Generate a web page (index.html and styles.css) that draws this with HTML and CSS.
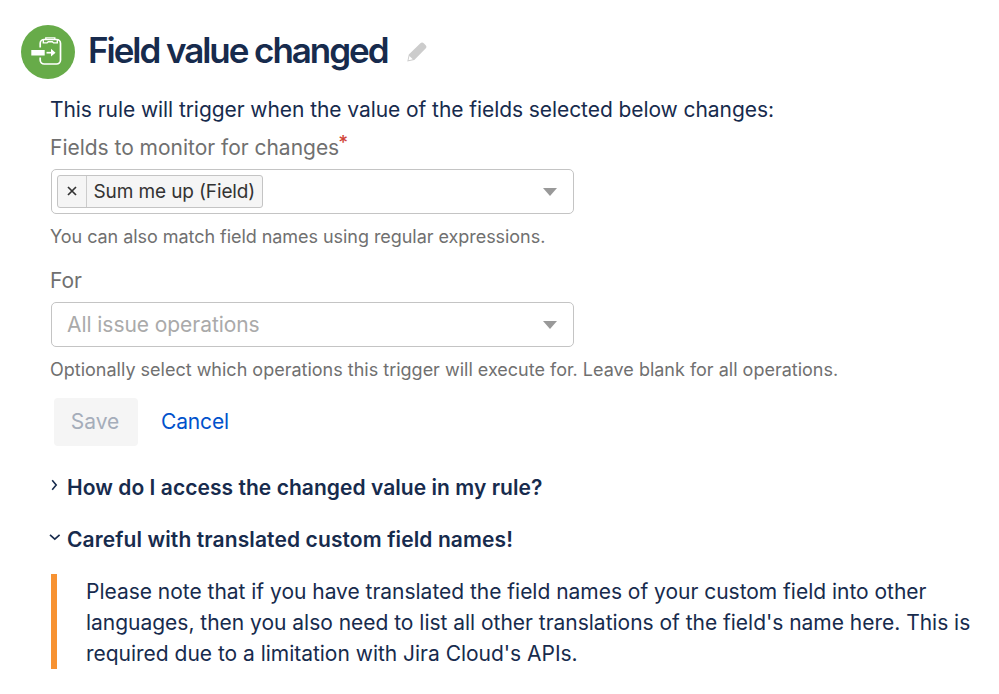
FILE: index.html
```
<!DOCTYPE html>
<html lang="en">
<head>
    <meta charset="UTF-8">
    <meta name="viewport" content="width=device-width, initial-scale=1.0">
    <title>Field value changed</title>
    <link rel="stylesheet" href="styles.css">
</head>
<body>
    <header class="rule-header">
        <svg class="rule-icon" viewBox="0 0 54 54">
            <circle cx="27" cy="27" r="27" fill="#67ab49"/>
            <g fill="none" stroke="#fff" stroke-width="1.700">
                <path d="M19.200 22.500V18.500a4 4 0 0 1 4-4h12.300a4 4 0 0 1 4 4v16.500a4 4 0 0 1-4 4H23.200a4 4 0 0 1-4-4V32.500"/>
                <path d="M22.300 15v2.900h3.700l1.300-1.200h4l1.300 1.200h3.700V15" stroke-width="1.400"/>
                <path d="M24.800 14.500v-1.600h9v1.600" stroke-width="1.400"/>
                <path d="M25.500 27.700h5"/>
            </g>
            <path d="M10.300 25h13.400v5.400H10.300zM30 23.800l4.500 3.900-4.500 3.900z" fill="#fff"/>
        </svg>
        <h1>Field value changed</h1>
        <svg class="edit-icon" viewBox="0 0 20 20">
            <path d="M1.800 12.500L13.400 1.300c1-1 2.400-1 3.600.1l1.500 1.500c1.200 1.200 1.200 2.500.1 3.600L7.300 18 .3 19.500z" fill="#ccc"/>
            <path d="M2.400 14l3.400 3.300-4.300 1z" fill="#fff"/>
        </svg>
    </header>

    <main>
        <p class="intro">This rule will trigger when the value of the fields selected below changes:</p>

        <form>
            <div class="field">
                <div class="label">Fields to monitor for changes<span class="required">*</span></div>
                <div class="select">
                    <div class="tag">
                        <span class="tag-remove">
                            <svg width="10" height="10" viewBox="0 0 10 10"><path d="M1 1l8 8M9 1l-8 8"/></svg>
                        </span>
                        <span class="tag-name">Sum me up (Field)</span>
                    </div>
                    <span class="arrow"></span>
                </div>
                <p class="help help-regex">You can also match field names using regular expressions.</p>
            </div>

            <div class="field">
                <div class="label">For</div>
                <div class="select">
                    <span class="placeholder">All issue operations</span>
                    <span class="arrow"></span>
                </div>
                <p class="help">Optionally select which operations this trigger will execute for. Leave blank for all operations.</p>
            </div>

            <div class="buttons">
                <button type="button" class="save" disabled>Save</button>
                <a class="cancel">Cancel</a>
            </div>
        </form>

        <!-- Collapsible help -->
        <div class="expander">
            <svg class="chevron" viewBox="0 0 12 12"><path d="M3.200 1.200L7.200 6l-4 4.800"/></svg>
            <span class="question">How do I access the changed value in my rule?</span>
        </div>
        <div class="expander">
            <svg class="chevron" viewBox="0 0 12 12"><path d="M1 3.800l4.800 4.400 4.800-4.400"/></svg>
            <span class="careful">Careful with translated custom field names!</span>
        </div>
        <div class="note">
            Please note that if you have translated the field names of your custom field into other<br>
            languages, then you also need to list all other translations of the field's name here. This is<br>
            required due to a limitation with Jira Cloud's APIs.
        </div>
    </main>
</body>
</html>
```

FILE: styles.css
```
body {
    margin: 0;
    padding: 25px 20px 0 21px;
    background-color: #fff;
    color: #172b4d;
    font-family: Inter, "Liberation Sans", sans-serif;
    font-size: 21px;
    line-height: 31.5px;
    white-space: nowrap;
}

/* Rule title */
.rule-header {
    display: flex;
    align-items: center;
    height: 54px;
}

.rule-icon {
    width: 54px;
    height: 54px;
}

h1 {
    margin: 0 19px 4px 13px;
    font-size: 35px;
    font-weight: 600;
    line-height: 42px;
    letter-spacing: -2.050px;
}

.edit-icon {
    width: 20px;
    height: 20px;
}

main {
    padding: 15px 0 0 30px;
}

p {
    margin: 0;
}

.intro {
    margin-left: -1px;
    letter-spacing: -0.070px;
}

/* Form fields */
.label {
    height: 37px;
    padding-top: 6px;
    box-sizing: border-box;
    margin-bottom: 6.500px;
    margin-left: -1px;
    color: #707070;
    letter-spacing: -0.020px;
}

.required {
    position: relative;
    top: -6px;
    left: -1px;
    color: #d04437;
    font-size: 19px;
    font-weight: 500;
    line-height: 1;
}

.select {
    display: flex;
    align-items: center;
    width: 523px;
    height: 44.500px;
    box-sizing: border-box;
    padding: 0 16px 0 5px;
    border: 1px solid #c4c4c4;
    border-radius: 5px;
}

.tag {
    display: flex;
    height: 33px;
    box-sizing: border-box;
    border: 1px solid #c4c4c4;
    border-radius: 3px;
    background-color: #f5f5f5;
    color: #333;
    font-size: 19px;
    line-height: 31px;
    letter-spacing: -0.120px;
}

.tag-remove {
    display: flex;
    align-items: center;
    justify-content: center;
    width: 27.500px;
    border-right: 1px solid #ccc;
}

.tag-remove svg {
    fill: none;
    stroke: #333;
    stroke-width: 1.700;
}

.tag-name {
    padding: 0 7px;
}

.arrow {
    margin: 2px 0 0 auto;
    border: 7px solid transparent;
    border-top: 8px solid #999;
    border-bottom: 0;
}

.placeholder {
    padding-left: 10px;
    color: #aaa;
    letter-spacing: -0.060px;
}

.help {
    margin-left: -1px;
    padding-top: 9px;
    color: #707070;
    font-size: 18px;
    line-height: 27px;
}

.help-regex {
    margin-bottom: 9px;
    letter-spacing: -0.050px;
}

/* Form buttons */
.buttons {
    display: flex;
    align-items: center;
    gap: 23px;
    margin: 15px 0 27px 3px;
}

.save {
    width: 84px;
    height: 48px;
    padding: 0 2px 0 0;
    border: 0;
    border-radius: 4px;
    background-color: #f5f5f5;
    color: #a5adba;
    font-family: inherit;
    font-size: 21px;
}

.cancel {
    color: #0052cc;
    letter-spacing: -0.150px;
}

/* Expandable help */
.expander {
    display: flex;
    align-items: center;
    height: 31px;
    margin-bottom: 21px;
    font-weight: 600;
}

.expander + .expander {
    margin-bottom: 18px;
}

.chevron {
    width: 12px;
    height: 12px;
    margin: 0 6px 6px -2px;
    fill: none;
    stroke: #172b4d;
    stroke-width: 1.600;
}

.question {
    letter-spacing: 0.050px;
}

.careful {
    letter-spacing: 0.110px;
}

.note {
    width: 900px;
    height: 95px;
    box-sizing: border-box;
    padding: 2px 0 0 29px;
    border-left: 6px solid #f79232;
    line-height: 31.300px;
    letter-spacing: -0.020px;
}
```
